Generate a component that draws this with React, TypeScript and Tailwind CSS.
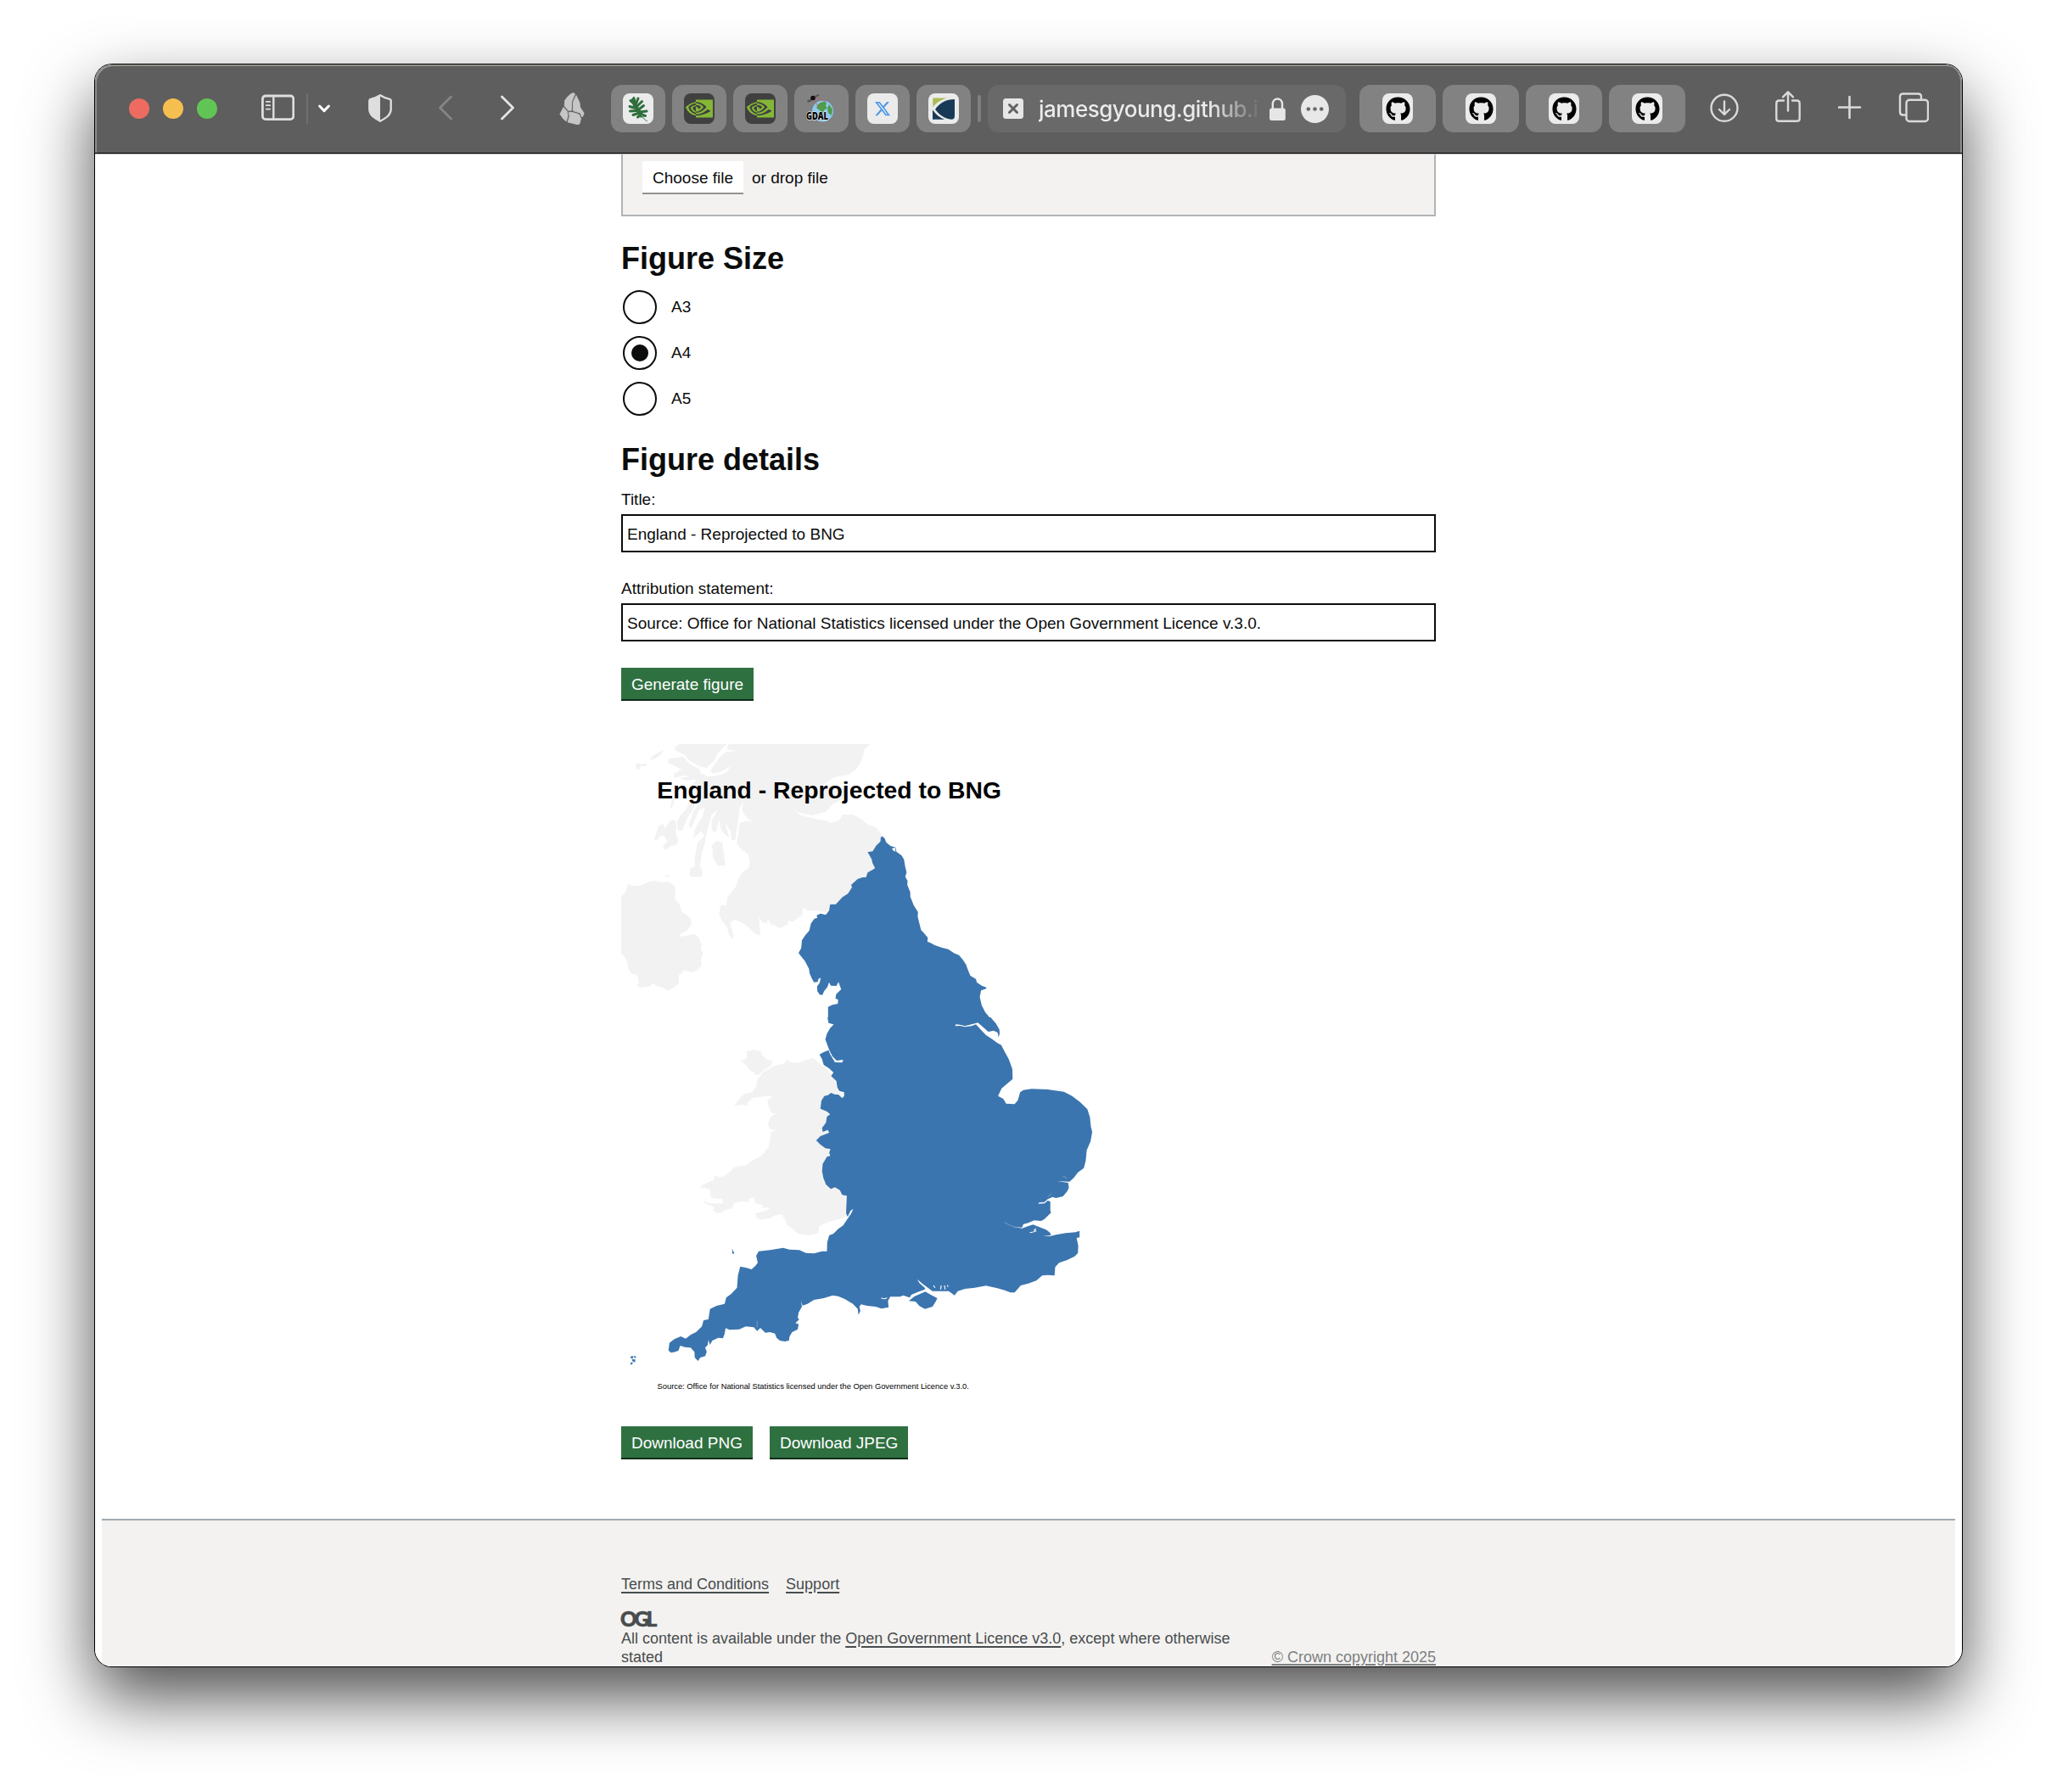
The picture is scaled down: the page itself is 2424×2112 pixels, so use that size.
import React from "react";
import { FaGithub, FaXTwitter } from "react-icons/fa6";
import { SiNvidia } from "react-icons/si";

const LAND = "#f2f2f2";
const ENGLAND = "#3b75af";

function SidebarIcon() {
  return (
    <svg className="ml-[52px] h-10 w-[39px] shrink-0" viewBox="308 108 39 40" fill="none" stroke="#dedede">
      <rect x="309.4" y="113" width="36.4" height="27.6" rx="3.6" strokeWidth="2.8" />
      <path d="M322.3 113v27.6" strokeWidth="2.4" />
      <path d="M313.8 119.8h4.4M313.8 124.2h4.4M313.8 128.6h4.4" strokeWidth="1.8" strokeLinecap="round" />
    </svg>
  );
}

function ShieldIcon() {
  return (
    <svg className="ml-[45px] h-10 w-[28px] shrink-0" viewBox="434 108 28 40">
      <path
        d="M448 112.200c-3.600 2.400-8 3.800-11.200 4.600-1 .3-1.500.8-1.500 1.900v9.600c0 7.400 6 11 12.700 14.400 6.700-3.400 12.700-7 12.700-14.400v-9.600c0-1.100-.5-1.600-1.500-1.900-3.200-.8-7.600-2.200-11.200-4.600z"
        fill="none"
        stroke="#dedede"
        strokeWidth="2.4"
        strokeLinejoin="round"
      />
      <path d="M448 112.200c-3.600 2.400-8 3.800-11.200 4.600-1 .3-1.500.8-1.500 1.900v9.600c0 7.400 6 11 12.700 14.400z" fill="#dedede" />
    </svg>
  );
}

function RockIcon() {
  return (
    <svg className="ml-[53px] h-10 w-[30px] shrink-0" viewBox="659 108 30 40" fill="#c6c6c6" stroke="#c6c6c6" strokeWidth=".8" strokeLinejoin="round">
      <path d="M675.500 109.500 677.500 110.700 673.600 120 673.300 130 669.600 130.300 665.200 124.800 665.600 118.500Q671 110.500 675.500 109.500Z" />
      <path d="M679 112.500 683 121 683.700 126.500 688.200 133.500 686.600 137.400 685.400 137.600 684 133.300 675.300 130.500 675.300 120.500Z" />
      <path d="M664 126.500 668.200 131.200 669.200 136 667.400 142.900 664 140.200 659.900 134.500Z" />
      <path d="M670.200 132.300 674 132.300 682.200 134.700 684.600 139.800 682.800 146.200 680 146.600 669.200 143.900 671.200 136.500Z" />
    </svg>
  );
}

function OakLeaf() {
  return (
    <svg viewBox="0 0 36 36" className="h-9 w-9">
      <g stroke="#2e6f3c" fill="none" strokeLinecap="round">
        <path d="M12.500 8 15 16 22 26" strokeWidth="5" />
        <path d="M13 12 9 8.500M12.500 9 13 5.500M15 13.500 18 6M16 16 22.500 9.500M18 19.500 24.500 14.500M20 22 28 21M13 17 8 15.500M15.500 20.500 8.500 21M18 23.500 12 25.500M21.500 25 17.500 28M22 25 26.500 26.500" strokeWidth="3" />
      </g>
      <path d="M22 26c2 3 4 6 7 7" stroke="#6fa079" strokeWidth="1.200" fill="none" />
    </svg>
  );
}

function GdalLogo() {
  return (
    <svg viewBox="0 0 36 36" className="h-9 w-9">
      <circle cx="19.500" cy="21" r="12.500" fill="#8cc9ee" />
      <path d="M14 13c3-3 8-4 10-2l-1 4 2 2-4 3-2 4-3-4-4-3zM27 13l4 6-1 7-4-3-1-5z" fill="#4e9d49" />
      <path d="M9 6l6 12M12 5l11 5" stroke="#c2557a" strokeWidth=".8" />
      <path d="M1 8.500l5-2 1 2.500-5 2zM10 3l5-2 .6 1.800-5 2z" fill="#555" />
      <circle cx="8" cy="5.500" r="2.800" fill="#111" />
      <text
        x="0"
        y="31"
        fontFamily="Open Sans, sans-serif"
        fontSize="12.500"
        fontWeight="800"
        textLength="26"
        lengthAdjust="spacingAndGlyphs"
        fill="#000"
        stroke="#ddd"
        strokeWidth="1.500"
        paintOrder="stroke"
      >
        GDAL
      </text>
    </svg>
  );
}

function ShellLogo() {
  return (
    <svg viewBox="0 0 36 36" className="h-9 w-9">
      <path d="M5.300 16.500V5.500H22.500C14.500 7.500 9 11 5.300 16.500z" fill="#aabb55" />
      <path d="M31 7v19.500c0 3-1.200 4.300-4 4.300C19.500 30 13 25.500 8 19 13 11.500 20.500 7 31 7z" fill="#183a56" />
      <path d="M5 19.500c3.500 5 8 9 14 11.300H5z" fill="#183a56" />
    </svg>
  );
}

function IconTab({ bg, children }: { bg: string; children: React.ReactNode }) {
  return (
    <div className="flex h-14 w-16 shrink-0 items-center justify-center rounded-[13px] bg-[#828282]">
      <div className={"flex h-9 w-9 items-center justify-center overflow-hidden rounded-lg " + bg}>{children}</div>
    </div>
  );
}

function Toolbar() {
  return (
    <div className="flex h-[104px] w-full shrink-0 items-center rounded-t-[20px] bg-[#5e5e5e] shadow-[inset_2px_2px_0_#8e908c,inset_-2px_0_0_#8e908c]">
      <div className="ml-10 flex gap-4">
        <span className="h-6 w-6 rounded-full bg-[#ed6b60]" />
        <span className="h-6 w-6 rounded-full bg-[#f5bf4f]" />
        <span className="h-6 w-6 rounded-full bg-[#61c555]" />
      </div>
      <SidebarIcon />
      <div className="ml-[14px] h-9 w-0.5 bg-[#6f6f6f]" />
      <svg className="ml-3 h-10 w-[14px] shrink-0" viewBox="375 108 14 40" fill="none" stroke="#fff" strokeWidth="3" strokeLinecap="round" strokeLinejoin="round">
        <path d="M376.600 125l5.400 5.600 5.400-5.600" />
      </svg>
      <ShieldIcon />
      <svg className="ml-[55px] h-10 w-4 shrink-0" viewBox="517 108 16 40" fill="none" stroke="#858585" strokeWidth="2.800" strokeLinecap="round" strokeLinejoin="round">
        <path d="M531.500 114l-13 13 13 13" />
      </svg>
      <svg className="ml-[57px] h-10 w-4 shrink-0" viewBox="590 108 16 40" fill="none" stroke="#e4e4e4" strokeWidth="2.800" strokeLinecap="round" strokeLinejoin="round">
        <path d="M591.500 114l13 13-13 13" />
      </svg>
      <RockIcon />
      <div className="ml-[31px] flex gap-2">
        <IconTab bg="bg-[#ebebeb]"><OakLeaf /></IconTab>
        <IconTab bg="bg-[#404040]"><SiNvidia className="h-[32px] w-[32px] text-[#84b737]" /></IconTab>
        <IconTab bg="bg-[#404040]"><SiNvidia className="h-[32px] w-[32px] text-[#84b737]" /></IconTab>
        <IconTab bg="bg-transparent"><GdalLogo /></IconTab>
        <IconTab bg="bg-[#ebebeb]"><FaXTwitter className="h-5 w-5 text-[#4a97e9]" /></IconTab>
        <IconTab bg="bg-[#ebebeb]"><ShellLogo /></IconTab>
      </div>
      <div className="ml-2 h-8 w-1 shrink-0 rounded-full bg-[#7f7f7f]" />
      <div className="ml-2 flex h-14 w-[422px] shrink-0 items-center rounded-[13px] bg-[#696969]">
        <svg className="ml-[18px] h-6 w-6 shrink-0" viewBox="0 0 24 24">
          <rect width="24" height="24" rx="3.500" fill="#e6e6e6" />
          <path d="M7.500 7.500l9 9M16.500 7.500l-9 9" stroke="#636363" strokeWidth="3" strokeLinecap="round" />
        </svg>
        <div className="ml-[18px] w-[258px] overflow-hidden bg-[linear-gradient(90deg,#ececec_78%,#696969_102%)] bg-clip-text pt-0.5 font-['Inter',sans-serif] text-[26px] leading-[34px] font-medium tracking-[-0.5px] whitespace-nowrap text-transparent">
          jamesgyoung.github.i
        </div>
        <svg className="ml-[14px] h-10 w-[19px] shrink-0" viewBox="1496 108 19 40">
          <rect x="1496" y="127.500" width="18.800" height="14.500" rx="2.500" fill="#e6e6e6" />
          <path d="M1499.800 128v-5.500c0-8 11.200-8 11.200 0v5.500" fill="none" stroke="#e6e6e6" strokeWidth="2.400" />
        </svg>
        <svg className="ml-[18px] h-[33px] w-[33px] shrink-0" viewBox="0 0 33 33">
          <circle cx="16.500" cy="16.500" r="16.500" fill="#e8e8e8" />
          <circle cx="8.800" cy="16.500" r="2.300" fill="#696969" />
          <circle cx="16.500" cy="16.500" r="2.300" fill="#696969" />
          <circle cx="24.200" cy="16.500" r="2.300" fill="#696969" />
        </svg>
      </div>
      <div className="ml-4 flex gap-2">
        {[0, 1, 2, 3].map((i) => (
          <div key={i} className="flex h-14 w-[90px] shrink-0 items-center justify-center rounded-[13px] bg-[#828282]">
            <div className="flex h-9 w-9 items-center justify-center rounded-lg bg-[#ebebeb]">
              <FaGithub className="h-[29px] w-[29px] text-black" />
            </div>
          </div>
        ))}
      </div>
      <svg className="ml-[28px] h-10 w-9 shrink-0" viewBox="2014 108 36 40" fill="none" stroke="#dadada" strokeWidth="2.400" strokeLinecap="round" strokeLinejoin="round">
        <circle cx="2032" cy="127.300" r="15.500" />
        <path d="M2032 119.500v15M2026 129l6 6 6-6" />
      </svg>
      <svg className="ml-[42px] h-[44px] w-[30px] shrink-0" viewBox="2092 106 30 44" fill="none" stroke="#dadada" strokeWidth="2.400" strokeLinecap="round" strokeLinejoin="round">
        <path d="M2102 118.500h-5.300c-2.300 0-3.400 1.200-3.400 3.400v17.500c0 2.200 1.100 3.400 3.400 3.400h20.600c2.300 0 3.400-1.200 3.400-3.400v-17.500c0-2.200-1.100-3.400-3.400-3.400H2112M2107 130.500V108.500M2101 114.300l6-6 6 6" />
      </svg>
      <svg className="ml-[44px] h-10 w-7 shrink-0" viewBox="2166 108 28 40" fill="none" stroke="#dadada" strokeWidth="2.600" strokeLinecap="round">
        <path d="M2179.500 114v25M2167 126.500h25" />
      </svg>
      <svg className="ml-[43px] h-10 w-9 shrink-0" viewBox="2237 108 36 40" fill="none" stroke="#dadada" strokeWidth="2.400" strokeLinejoin="round">
        <path d="M2246 135.500h-3.500c-2.300 0-3.500-1.300-3.500-3.500v-18c0-2.200 1.200-3.500 3.500-3.500h18c2.300 0 3.500 1.300 3.500 3.500v3.500" />
        <rect x="2246.500" y="117.800" width="25.500" height="25.200" rx="3.600" />
      </svg>
    </div>
  );
}

function Map() {
  return (
    <svg className="mt-[51px] block h-[792px] w-[560px]" viewBox="0 0 560 792">
      <g transform="translate(-12,-17) scale(0.39541,0.33333)">
        <g fill={LAND}>
          <path d="M350 51H772L755 70 750 95 742 120 730 140 708 160 690 162 665 168 640 188 615 205 660 195 690 205 705 225 690 245 660 265 640 290 600 303 575 297 558 293 545 275 553 292 565 303 600 313 640 322 655 330 680 320 690 300 720 300 745 315 765 335 790 345 803 365 809 377 800 440 810 500 720 610 655 640 640 645 610 640 585 640 572 628 570 655 555 668 540 680 530 675 525 690 500 703 485 688 480 695 468 668 465 685 450 680 441 660 445 727 430 722 415 705 395 685 370 672 355 682 358 700 365 725 362 740 352 725 345 695 330 675 322 650 327 622 340 620 350 635 350 652 343 620 348 590 358 575 372 555 382 520 395 500 410 490 414 465 408 440 385 420 375 400 380 360 383 330 405 322 425 328 405 312 390 285 395 255 384 275 378 330 370 390 360 392 357 360 340 328 345 350 352 382 338 370 325 345 325 315 318 340 312 365 300 355 300 320 318 285 300 300 288 350 280 400 270 440 265 485 273 495 270 520 240 522 233 510 238 488 250 485 250 450 258 400 280 375 268 360 245 385 250 350 272 310 280 275 262 285 250 320 238 350 232 335 245 290 262 262 250 230 240 200 262 165 300 165 330 158 345 150 356 128 330 148 305 155 295 148 310 120 330 90 345 78 375 75 345 70Z" />
          <path d="M205 51H345L320 80 310 105 285 135 262 130 235 110 220 90 190 72 192 60Z" />
          <path d="M190 100 215 95 228 115 245 128 262 138 268 155 285 160 270 175 225 180 205 172 235 165 215 162 190 170 185 158 210 140 192 130 170 118 172 102Z" />
          <path d="M72 122 82 118 90 122 108 118 104 128 88 130 84 142 76 138ZM115 104 130 88 155 72 152 84 140 97 122 106Z" />
          <path d="M250 270 240 290 228 310 212 358 200 358 196 330 205 305 222 285 232 262 245 250ZM190 318 196 345 192 362 200 392 196 405 180 412 160 425 155 410 168 395 158 375 148 376 136 390 128 390 142 340 156 334 160 350 176 322ZM190 235 185 270 176 280 182 245Z" />
          <path d="M315 393 332 398 335 430 340 465 340 480 318 480 305 455 302 435 305 425 298 412Z" />
          <path d="M158 517 172 514 174 522 164 520Z" />
          <path d="M30 590 45 572 50 545 65 552 85 552 105 542 128 533 150 540 170 537 188 550 193 575 190 597 205 620 212 645 225 655 238 668 240 690 228 708 205 725 208 732 250 722 262 735 270 760 268 775 275 790 268 815 270 835 255 852 240 858 215 850 213 860 202 868 203 895 190 910 170 923 150 910 132 905 128 895 115 908 85 912 78 905 83 895 80 870 70 865 60 862 52 845 48 820 38 800 30 792Z" />
        </g>
        <path
          fill={ENGLAND}
          d="M809 377 816 385 820 398 833 411 848 416 851 432 866 445 873 458 877 485 881 505 877 520 884 535 883 548 892 575 892 590 902 620 915 645 914 660 919 685 924 708 935 722 944 735 943 750 950 752 965 762 985 770 1005 776 1022 790 1037 797 1048 812 1058 830 1064 850 1071 870 1088 882 1090 893 1105 905 1120 912 1115 917 1103 922 1099 945 1105 975 1115 998 1130 1020V1024H647V980L660 973 676 969 677 955 669 950 671 935 686 918 682 905 678 892 672 906 655 905 650 893 645 910 635 925 630 938 622 937 615 925 614 908 622 895 625 877 618 882 616 892 605 893 598 878 592 862 590 845 578 818 568 803 559 790 567 772 569 745 578 728 591 710 596 685 606 668 615 665 613 656 625 650 640 655 650 640 653 618 670 617 690 592 706 580 718 558 716 548 735 528 750 522 760 522 765 505 780 495 787 490 779 470 777 458 765 433 780 430 790 410 803 395 804 380Z"
        />
        <path fill="#fff" d="M837 420l10-3 1 14-6-3z" />
      </g>
      <g transform="translate(-12,323) scale(0.38265,0.33333)">
        <g fill={LAND}>
          <path d="M540 145 552 155 575 158 600 148 622 140 640 158 660 175 672 190 685 200 700 260 715 270 700 290 690 400 690 500 720 620 728 700 700 712 670 720 642 735 638 760 610 768 575 762 555 740 543 733 535 710 525 693 500 700 490 707 460 713 447 705 445 690 465 685 488 675 485 668 470 672 465 660 445 655 440 632 425 640 425 650 400 648 378 655 375 672 350 678 345 685 330 690 315 680 318 668 290 655 282 645 305 655 325 655 345 655 343 640 308 635 305 605 290 600 273 598 290 585 320 570 316 555 330 562 345 560 372 538 375 530 385 525 415 520 435 503 465 485 485 455 490 430 493 403 512 392 492 395 483 375 490 350 508 337 495 335 485 310 482 290 497 278 485 274 460 278 435 283 420 300 418 312 405 305 380 310 395 285 410 268 435 262 447 240 452 215 470 190 500 170 535 160Z" />
          <path d="M418 118 440 112 462 118 465 130 478 145 500 152 490 170 472 182 458 198 445 202 440 190 428 185 415 165 397 148 412 148 418 140Z" />
        </g>
        <g fill={ENGLAND}>
          <path d="M667-3H1169L1185 18 1196 40 1197 55 1193 68 1192 56 1190 50 1178 44 1162 48 1148 34 1130 16 1110 22 1090 28 1075 23 1062 22 1060 28 1075 27 1090 31 1110 28 1124 22 1140 42 1155 60 1175 75 1190 88 1202 95 1212 118 1225 145 1236 180 1237 215 1220 232 1203 248 1192 275 1208 285 1217 302 1243 304 1253 290 1260 262 1270 254 1295 250 1345 252 1395 260 1420 275 1445 297 1467 322 1475 350 1478 385 1482 402 1477 435 1465 467 1462 505 1456 530 1438 545 1425 565 1412 578 1374 576 1408 582 1410 600 1405 612 1392 630 1370 636 1360 632 1345 640 1335 650 1318 652 1316 656 1335 655 1345 645 1353 648 1353 680 1355 688 1335 710 1325 717 1303 715 1285 724 1270 728 1266 740 1240 738 1266 743 1285 735 1300 730 1318 738 1340 748 1352 758 1355 768 1330 768 1352 771 1370 766 1400 760 1430 757 1443 752 1443 775 1434 777 1439 805 1438 830 1428 842 1405 855 1380 865 1368 880 1366 910 1345 908 1328 910 1310 928 1285 938 1262 945 1243 970 1230 970 1213 962 1190 955 1155 946 1120 953 1090 957 1068 965 1058 980 1040 965 1015 965 990 965 960 940 943 923 950 937 968 955 965 960 945 968 925 978 920 988 900 980 890 985 860 985 853 1000 855 1022 833 1027 815 1020 790 1017 770 1012 765 1020 768 1035 762 1049 760 1028 745 1010 720 993 700 983 683 980 655 990 625 996 605 1010 590 1016 585 1000 588 1020 578 1040 575 1060 580 1065 568 1078 578 1082 575 1100 558 1110 550 1125 548 1140 535 1143 520 1140 510 1130 505 1115 490 1110 475 1112 460 1095 450 1106 440 1093 415 1090 395 1100 365 1102 353 1096 350 1115 345 1132 330 1130 312 1140 305 1155 300 1138 298 1155 290 1165 295 1180 290 1195 275 1200 268 1212 258 1200 257 1180 245 1165 228 1163 213 1158 208 1175 198 1180 185 1183 177 1175 180 1148 195 1135 215 1125 230 1133 245 1120 262 1110 280 1090 285 1068 300 1065 305 1028 325 1017 350 1010 355 988 370 975 388 953 391 910 398 878 415 882 433 888 445 875 452 865 447 840 455 824 490 820 530 812 550 818 580 820 600 830 625 832 650 824 665 824 666 792 672 768 685 762 700 745 715 733 728 710 740 690 746 675 738 680 729 702 724 690 726 628 712 625 705 608 690 598 677 604 662 588 654 565 650 540 652 515 665 490 675 487 672 475 676 463 660 460 645 447 632 432 645 417 660 410 672 405 668 395 652 402 650 388 662 370 665 348 675 340 665 330 645 320 648 292 657 275 668 272 678 264 690 270 700 270 712 283 718 275 718 262 703 257 697 245 694 222 678 205 685 192 672 178 655 165 650 145 642 128 655 120 670 113 676 130 690 156 712 157 715 147 695 150 682 135 673 115 668 100 660 75 665 55 675 35 686 22 670 17Z" />
          <path d="M917 1000 935 983 968 967 985 978 1005 990 1000 1002 990 1020 967 1028 950 1018 938 1002Z" />
          <path d="M373 815 380 832 374 833ZM59 1197l8-3 2 7-6 3zM69 1194l9 2-4 7zM64 1205l11 2-1 10-8-4zM60 1219l6-3 1 6-6 4z" />
        </g>
        <g stroke="#fff" fill="none" strokeWidth="3">
          <path d="M1290 758l14-3 4-12M1302 748l8 6M832 990l12 2 6-4M993 945l5 8M1017 945l-2 14M1027 945l2 14M1036 944l2 6" />
          <path strokeWidth="1.200" opacity=".7" d="M1212 722l16 10 20 8M1345 632l12-12M1392 558l12 8M450 1070v24" />
        </g>
      </g>
      <g fill="#000" fontFamily="Liberation Sans, Arial, sans-serif">
        <text x="42.300" y="63.700" fontSize="28.300" fontWeight="700">England - Reprojected to BNG</text>
        <text x="42.500" y="760" fontSize="9.360">
          Source: Office for National Statistics licensed under the Open Government Licence v.3.0.
        </text>
      </g>
    </svg>
  );
}

function Radio({ label, checked }: { label: string; checked?: boolean }) {
  return (
    <label className="flex h-11 items-center pl-0.5">
      <span className="flex h-10 w-10 items-center justify-center rounded-full border-2 border-[#0b0c0c]">
        {checked && <span className="h-5 w-5 rounded-full bg-[#0b0c0c]" />}
      </span>
      <span className="ml-[17px] pb-0.5">{label}</span>
    </label>
  );
}

function Button({ children }: { children: React.ReactNode }) {
  return (
    <button className="h-[39px] border-b-2 border-[#0d2c19] bg-[#2f7041] px-3 pt-px text-[19px] leading-[35px] text-white">
      {children}
    </button>
  );
}

function Field({ label, value, className }: { label: string; value: string; className: string }) {
  return (
    <div className={className}>
      <div className="h-[25px] leading-[25px]">{label}</div>
      <div className="mt-[5px] h-[45px] border-2 border-[#0b0c0c] pt-px pl-[5px] leading-[41px]">{value}</div>
    </div>
  );
}

export default function App() {
  return (
    <div className="h-[2112px] w-[2424px] overflow-hidden bg-white pt-[76px] pl-[112px]">
      <div className="h-[1888px] w-[2200px] rounded-[20px] shadow-[0_0_0_1px_#000,0_36px_80px_rgba(0,0,0,0.7)]">
        <div className="flex h-full w-full flex-col overflow-hidden rounded-[20px] bg-white font-['Liberation_Sans',Arial,sans-serif] text-[19px] leading-[25px] text-[#0b0c0c]">
          <Toolbar />
          <div className="h-0.5 shrink-0 border-t border-black bg-[#b5b5b5]" />
          <main className="ml-[620px] w-[960px] shrink-0">
            <div className="flex h-[73px] border-x-2 border-b-2 border-[#b1b4b6] bg-[#f3f2f1] pt-2 pl-[23px]">
              <div className="h-[39px] w-[119px] border-b-2 border-[#929191] bg-white pt-px text-center leading-[37px]">Choose file</div>
              <div className="ml-[10px] pt-px leading-[37px]">or drop file</div>
            </div>
            <h2 className="mt-[30px] h-10 text-[36px] leading-10 font-bold">Figure Size</h2>
            <div className="mt-[15px] flex flex-col gap-[10px]">
              <Radio label="A3" />
              <Radio label="A4" checked />
              <Radio label="A5" />
            </div>
            <h2 className="mt-[30px] h-10 text-[36px] leading-10 font-bold">Figure details</h2>
            <Field className="mt-[14px]" label="Title:" value="England - Reprojected to BNG" />
            <Field
              className="mt-[30px]"
              label="Attribution statement:"
              value="Source: Office for National Statistics licensed under the Open Government Licence v.3.0."
            />
            <div className="mt-[31px] flex">
              <Button>Generate figure</Button>
            </div>
            <Map />
            <div className="mt-3 flex gap-5">
              <Button>Download PNG</Button>
              <Button>Download JPEG</Button>
            </div>
          </main>
          <footer className="mx-2 mt-[70px] h-[180px] shrink-0 border-t-2 border-[#a1aaaf] bg-[#f3f2f0] text-[18px] leading-[22px] text-[#484c4e]">
            <div className="ml-[612px] w-[960px] pt-[64px]">
              <div className="flex gap-5">
                <a className="underline decoration-2 underline-offset-[3px]">Terms and Conditions</a>
                <a className="underline decoration-2 underline-offset-[3px]">Support</a>
              </div>
              <div className="mt-[21px] flex items-end justify-between">
                <div className="w-[725px]">
                  <svg className="block h-[18px] w-[42px] overflow-visible" viewBox="0 0 42 18">
                    <text x="-1" y="17.500" fontFamily="Lato, sans-serif" fontWeight="900" fontSize="24" letterSpacing="-3" fill="#484c4e" stroke="#484c4e" strokeWidth=".6">
                      OGL
                    </text>
                  </svg>
                  <div className="mt-[3px]">
                    All content is available under the{" "}
                    <a className="underline decoration-2 underline-offset-[3px]">Open Government Licence v3.0</a>, except where otherwise stated
                  </div>
                </div>
                <a className="text-[#7b8081] underline decoration-2 underline-offset-[2px]">© Crown copyright 2025</a>
              </div>
            </div>
          </footer>
        </div>
      </div>
    </div>
  );
}
